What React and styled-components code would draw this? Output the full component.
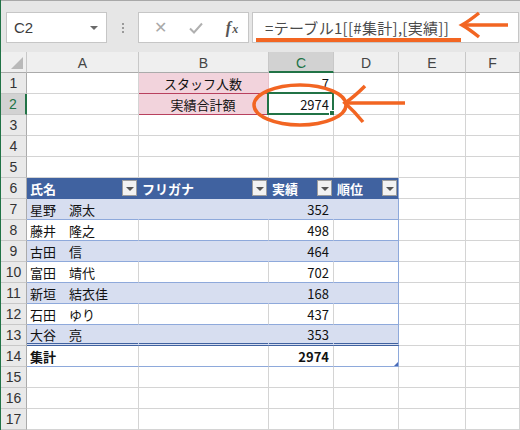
import React from "react";
import styled, { createGlobalStyle } from "styled-components";

const GlobalStyle = createGlobalStyle`
  html, body {
    margin: 0;
    padding: 0;
    background: #ffffff;
  }
  body {
    font-family: "Noto Sans CJK JP", "Liberation Sans", sans-serif;
  }
`;

const GREEN = "#217346";
const GRID = "#d4d4d4";
const TBL_HEAD = "#4062a0";
const TBL_STRIPE = "#d7def0";
const TBL_LINE = "#8ea9db";
const ORANGE = "#f26522";

const Window = styled.div`
  position: relative;
  width: 519px;
  height: 430px;
  border-left: 1px solid ${GREEN};
  overflow: hidden;
  background: #ffffff;
`;

const Toolbar = styled.div`
  box-sizing: border-box;
  height: 52px;
  border-top: 1px solid #a8a8a8;
  background: #e6e6e6;
  display: flex;
  align-items: flex-start;
  padding: 11px 0 0 5px;
`;

const Box = styled.div`
  box-sizing: border-box;
  height: 31px;
  background: #ffffff;
  border: 1px solid #c6c6c6;
  display: flex;
  align-items: center;
`;

const NameBox = styled(Box)`
  width: 101px;
  padding: 0 8px 0 7px;
  justify-content: space-between;
  font-family: "Liberation Sans", sans-serif;
  font-size: 15px;
  color: #3c3c3c;
`;

const DropArrow = styled.span`
  width: 0;
  height: 0;
  border-left: 4px solid transparent;
  border-right: 4px solid transparent;
  border-top: 4px solid #6a6a6a;
  margin-top: 1px;
`;

const Grip = styled.div`
  width: 31px;
  height: 31px;
  display: flex;
  flex-direction: column;
  align-items: center;
  justify-content: center;
  gap: 2px;
  span {
    width: 2px;
    height: 2px;
    background: #9a9a9a;
  }
`;

const FuncBox = styled(Box)`
  width: 111px;
  justify-content: space-between;
  padding: 0 7px 0 12px;
`;

const FuncIcon = styled.span`
  display: flex;
  align-items: center;
  justify-content: center;
  width: 18px;
  color: ${(p) => (p.$dark ? "#555555" : "#a9a9a9")};
  font-family: ${(p) => (p.$dark ? '"Liberation Serif", serif' : '"Liberation Sans", sans-serif')};
  font-style: ${(p) => (p.$dark ? "italic" : "normal")};
  font-weight: ${(p) => (p.$dark ? 700 : 400)};
  font-size: 16px;
`;

const FxSub = styled.span`
  font-size: 12px;
  margin-left: 1px;
  margin-top: 3px;
`;

const FormulaBox = styled(Box)`
  flex: 1;
  margin-left: 3px;
  margin-right: 1px;
  padding-left: 12px;
  font-size: 15px;
  color: #4a4a4a;
  letter-spacing: 0.3px;
`;

const Sheet = styled.div`
  display: grid;
  grid-template-columns: 26px 112px 130px 65px 65px 67px 1fr;
  grid-auto-rows: 21px;
`;

const ColHead = styled.div`
  box-sizing: border-box;
  display: flex;
  align-items: center;
  justify-content: center;
  background: ${(p) => (p.$active ? "#d2d2d2" : "#efefef")};
  color: ${(p) => (p.$active ? GREEN : "#444444")};
  border-right: 1px solid #c8c8c8;
  border-bottom: ${(p) => (p.$active ? `2px solid ${GREEN}` : "1px solid #ababab")};
  font-family: "Liberation Sans", sans-serif;
  font-size: 14px;
  padding-top: ${(p) => (p.$active ? "2px" : "1px")};
`;

const Corner = styled.div`
  box-sizing: border-box;
  background: #efefef;
  border-right: 1px solid #c8c8c8;
  border-bottom: 1px solid #ababab;
  display: flex;
  align-items: flex-end;
  justify-content: flex-end;
  padding: 0 3px 3px 0;
`;

const RowHead = styled.div`
  box-sizing: border-box;
  display: flex;
  align-items: center;
  justify-content: center;
  background: ${(p) => (p.$active ? "#d2d2d2" : "#e9e9e9")};
  color: ${(p) => (p.$active ? GREEN : "#333333")};
  border-right: ${(p) => (p.$active ? `2px solid ${GREEN}` : "1px solid #ababab")};
  border-bottom: 1px solid #c8c8c8;
  font-family: "Liberation Sans", sans-serif;
  font-size: 14px;
`;

const Cell = styled.div`
  position: relative;
  box-sizing: border-box;
  display: flex;
  align-items: center;
  justify-content: ${(p) =>
    p.$align === "right" ? "flex-end" : p.$align === "center" ? "center" : "space-between"};
  padding: ${(p) => (p.$filter ? "0 1px 0 3px" : "0 4px 0 3px")};
  background: ${(p) => p.$fill || "#ffffff"};
  border-right: 1px solid ${(p) => p.$br || GRID};
  border-bottom: ${(p) => p.$bb || `1px solid ${GRID}`};
  font-size: 13px;
  font-weight: ${(p) => (p.$bold ? 700 : 400)};
  color: ${(p) => p.$color || "#111111"};
  white-space: nowrap;
`;

const Selection = styled.div`
  position: absolute;
  left: -2px;
  top: -2px;
  right: -1px;
  bottom: -1px;
  border: 2px solid ${GREEN};
  pointer-events: none;
  &::after {
    content: "";
    position: absolute;
    right: -4px;
    bottom: -4px;
    width: 5px;
    height: 5px;
    background: ${GREEN};
    border: 1px solid #ffffff;
  }
`;

const ResizeHandle = styled.span`
  position: absolute;
  right: 0;
  bottom: 0;
  width: 0;
  height: 0;
  border-left: 4px solid transparent;
  border-bottom: 4px solid #4a6bb8;
`;

const FilterButton = styled.span`
  box-sizing: border-box;
  width: 15px;
  height: 16px;
  background: #f2f2f2;
  border: 1px solid #9d9d9d;
  display: flex;
  align-items: center;
  justify-content: center;
  &::before {
    content: "";
    width: 0;
    height: 0;
    border-left: 4px solid transparent;
    border-right: 4px solid transparent;
    border-top: 4px solid #555555;
    margin-top: 1px;
  }
`;

const Annotations = styled.svg`
  position: absolute;
  left: -1px;
  top: 0;
  pointer-events: none;
`;

const columns = ["A", "B", "C", "D", "E", "F"];

const people = [
  ["星野　源太", 352],
  ["藤井　隆之", 498],
  ["古田　信", 464],
  ["富田　靖代", 702],
  ["新垣　結衣佳", 168],
  ["石田　ゆり", 437],
  ["大谷　亮", 353],
];

function emptyCells(from, count, key) {
  return Array.from({ length: count }, (_, i) => <Cell key={`${key}-${from + i}`} />);
}

function tableRow(name, value, i) {
  const striped = i % 2 === 0;
  const last = i === people.length - 1;
  const fill = striped ? TBL_STRIPE : "#ffffff";
  const inner = striped ? TBL_STRIPE : GRID;
  const bb = last ? `3px double ${TBL_HEAD}` : `1px solid ${TBL_LINE}`;
  return [
    <Cell key="a" $fill={fill} $br={inner} $bb={bb}>{name}</Cell>,
    <Cell key="b" $fill={fill} $br={inner} $bb={bb} />,
    <Cell key="c" $fill={fill} $br={inner} $bb={bb} $align="right">{value}</Cell>,
    <Cell key="d" $fill={fill} $br={TBL_LINE} $bb={bb} />,
  ];
}

function renderRow(r) {
  const head = (
    <RowHead key="h" $active={r === 2}>
      {r}
    </RowHead>
  );
  if (r === 1) {
    return [
      head,
      <Cell key="a" />,
      <Cell key="b" $fill="#f2d3dc" $br="#e8c3cd" $bb="1px solid #b8405e" $align="center">スタッフ人数</Cell>,
      <Cell key="c" $align="right">7</Cell>,
      ...emptyCells(3, 3, "e"),
    ];
  }
  if (r === 2) {
    return [
      head,
      <Cell key="a" />,
      <Cell key="b" $fill="#f2d3dc" $br="#e8c3cd" $bb="1px solid #b8405e" $align="center">実績合計額</Cell>,
      <Cell key="c" $align="right">
        2974
        <Selection />
      </Cell>,
      ...emptyCells(3, 3, "e"),
    ];
  }
  if (r === 6) {
    const titles = ["氏名", "フリガナ", "実績", "順位"];
    return [
      head,
      ...titles.map((t, i) => (
        <Cell
          key={t}
          $filter
          $fill={TBL_HEAD}
          $br={i === 3 ? TBL_LINE : TBL_HEAD}
          $bb={`1px solid ${TBL_HEAD}`}
          $color="#ffffff"
          $bold
        >
          {t}
          <FilterButton />
        </Cell>
      )),
      ...emptyCells(4, 2, "e"),
    ];
  }
  if (r >= 7 && r <= 13) {
    const [name, value] = people[r - 7];
    return [head, ...tableRow(name, value, r - 7), ...emptyCells(4, 2, "e")];
  }
  if (r === 14) {
    const bb = `1px solid ${TBL_LINE}`;
    return [
      head,
      <Cell key="a" $bb={bb} $bold>集計</Cell>,
      <Cell key="b" $bb={bb} />,
      <Cell key="c" $bb={bb} $bold $align="right">2974</Cell>,
      <Cell key="d" $bb={bb} $br={TBL_LINE}>
        <ResizeHandle />
      </Cell>,
      ...emptyCells(4, 2, "e"),
    ];
  }
  return [head, ...emptyCells(0, 6, "e")];
}

export default function App() {
  const rows = Array.from({ length: 17 }, (_, i) => i + 1);
  return (
    <>
      <GlobalStyle />
      <Window>
        <Toolbar>
          <NameBox>
            C2
            <DropArrow />
          </NameBox>
          <Grip>
            <span />
            <span />
            <span />
          </Grip>
          <FuncBox>
            <FuncIcon>✕</FuncIcon>
            <FuncIcon>
              <svg width="16" height="14" viewBox="0 0 16 14">
                <path d="M2 7.5 L6 11.5 L14 2.5" fill="none" stroke="#b0b0b0" strokeWidth="2" />
              </svg>
            </FuncIcon>
            <FuncIcon $dark>
              f<FxSub>x</FxSub>
            </FuncIcon>
          </FuncBox>
          <FormulaBox>=テーブル1[[#集計],[実績]]</FormulaBox>
        </Toolbar>

        <Sheet>
          <Corner>
            <svg width="12" height="12" viewBox="0 0 12 12">
              <path d="M12 0 L12 12 L0 12 Z" fill="#b9b9b9" />
            </svg>
          </Corner>
          {columns.map((c) => (
            <ColHead key={c} $active={c === "C"}>
              {c}
            </ColHead>
          ))}
          {rows.map((r) => (
            <React.Fragment key={r}>{renderRow(r)}</React.Fragment>
          ))}
        </Sheet>

        <Annotations width="520" height="430" viewBox="0 0 520 430">
          <g fill="none" stroke={ORANGE} strokeLinecap="butt" strokeLinejoin="miter">
            <line x1="256" y1="40" x2="461" y2="40" strokeWidth="4" />
            <line x1="463" y1="25" x2="508" y2="25" strokeWidth="3.5" />
            <path d="M479 13 Q469 21 462 25 Q469 29 479 37" strokeWidth="3.5" />
            <ellipse cx="300" cy="105" rx="46" ry="20" strokeWidth="3.5" />
            <line x1="346" y1="103" x2="405" y2="103" strokeWidth="3.5" />
            <path d="M365 86 Q354 97 345 103 Q354 111 363 122" strokeWidth="3.5" />
          </g>
        </Annotations>
      </Window>
    </>
  );
}
